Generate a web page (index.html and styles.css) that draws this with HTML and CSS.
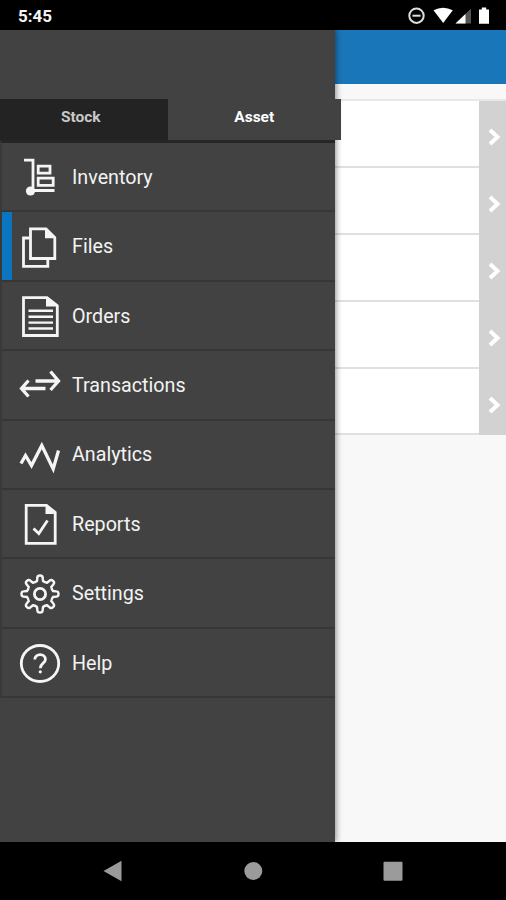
FILE: index.html
```html
<!DOCTYPE html>
<html lang="en">
<head>
<meta charset="utf-8">
<title>Files</title>
<link rel="stylesheet" href="styles.css">
</head>
<body>
<div class="phone">
  <header class="status">
    <span class="clock">5:45</span>
    <svg class="status-icons" width="84" height="20" viewBox="0 0 84 20">
      <circle cx="10.5" cy="9.700" r="7.2" fill="none" stroke="#ddd" stroke-width="2"/>
      <path d="M6.5 9.700h8" stroke="#ddd" stroke-width="2"/>
      <path d="M27.5 4.300Q37 -1 46.800 4.300L37.200 17Z" fill="#fff"/>
      <path d="M49.500 17.500L65 2.500V17.500Z" fill="#555"/>
      <path d="M49.500 17.500L59.500 8V17.500Z" fill="#fff"/>
      <path d="M73 3.500h2.800V1.500h4.400v2h2.800v14.200H73Z" fill="#fff"/>
    </svg>
  </header>

  <div class="screen">
    <main class="page">
      <div class="appbar"></div>
      <div class="list">
        <div class="entry"><span class="go"><svg width="14" height="18" viewBox="0 0 14 18"><path d="M3 2L10.500 9L3 16"/></svg></span></div>
        <div class="entry"><span class="go"><svg width="14" height="18" viewBox="0 0 14 18"><path d="M3 2L10.500 9L3 16"/></svg></span></div>
        <div class="entry"><span class="go"><svg width="14" height="18" viewBox="0 0 14 18"><path d="M3 2L10.500 9L3 16"/></svg></span></div>
        <div class="entry"><span class="go"><svg width="14" height="18" viewBox="0 0 14 18"><path d="M3 2L10.500 9L3 16"/></svg></span></div>
        <div class="entry"><span class="go"><svg width="14" height="18" viewBox="0 0 14 18"><path d="M3 2L10.500 9L3 16"/></svg></span></div>
      </div>
    </main>

    <aside class="drawer">
      <div class="tabs">
        <div class="tab stock">Stock</div>
        <div class="tab asset">Asset</div>
      </div>
      <nav class="menu">
        <a class="item">
          <svg class="icon" viewBox="0 0 40 40"><path d="M4 3.200H13V32.500M14 33.500H34.500"/><path d="M18.200 9.200H30v7H18.200ZM18.200 21.200H33.200v7.200H18.200Z"/><circle cx="10.500" cy="34" r="4.600" class="solid"/></svg>
          <span>Inventory</span>
        </a>
        <a class="item active">
          <svg class="icon" viewBox="0 0 40 40"><path d="M9.500 11H3.500V39.300H27.800V32"/><path d="M10.500 1.800H26L34.800 10.500V31.500H10.500Z"/><path d="M25 1.500V11.200H35Z" class="solid"/></svg>
          <span>Files</span>
        </a>
        <a class="item">
          <svg class="icon" viewBox="0 0 40 40"><path d="M3.500 1.700H27L37.300 9.700V39.500H3.500Z"/><path d="M26 1.500V10.500H37.500Z" class="solid"/><path class="lines" d="M8.500 14.800H33M8.500 20.700H33M8.500 26.600H33M8.500 32.500H33"/></svg>
          <span>Orders</span>
        </a>
        <a class="item">
          <svg class="icon bold" viewBox="0 0 40 40"><path d="M15.500 15H38.500M30.500 5.500L38.500 15L30.500 24M25.500 22.500H2M8.500 14.500L1.500 22.500L8.500 30.500"/></svg>
          <span>Transactions</span>
        </a>
        <a class="item">
          <svg class="icon bold" viewBox="0 0 40 40"><path d="M1 28.500L5.500 20.500L11.500 30.500L21.800 10.500L33.200 34L38.500 15.500"/></svg>
          <span>Analytics</span>
        </a>
        <a class="item">
          <svg class="icon" viewBox="0 0 40 40"><path d="M6.200 1.300H26.500L35.200 8.500V39.300H6.200Z"/><path d="M25.500 1.300V10H35Z" class="solid"/><path d="M13.500 24.500L18.800 29.500L27.500 16.500"/></svg>
          <span>Reports</span>
        </a>
        <a class="item">
          <svg class="icon" viewBox="-20 -20 40 40"><path class="gear" d="M-3 -13L-2.600 -16.500C-2.500 -19.200 2.500 -19.200 2.600 -16.500L3 -13Q4.800 -11.500 7.070 -11.310L9.830 -13.510C11.810 -15.340 15.340 -11.810 13.510 -9.830L11.310 -7.070Q11.500 -4.800 13 -3L16.500 -2.600C19.200 -2.500 19.200 2.500 16.500 2.600L13 3Q11.500 4.800 11.310 7.070L13.510 9.830C15.340 11.810 11.810 15.340 9.830 13.510L7.070 11.310Q4.800 11.500 3 13L2.600 16.500C2.500 19.200 -2.500 19.200 -2.600 16.500L-3 13Q-4.800 11.500 -7.070 11.310L-9.830 13.510C-11.810 15.340 -15.340 11.810 -13.510 9.830L-11.310 7.070Q-11.500 4.800 -13 3L-16.500 2.600C-19.200 2.500 -19.200 -2.500 -16.500 -2.600L-13 -3Q-11.500 -4.800 -11.310 -7.070L-13.510 -9.830C-15.340 -11.810 -11.810 -15.340 -9.830 -13.510L-7.070 -11.310Q-4.800 -11.500 -3 -13Z"/><circle r="5.600"/></svg>
          <span>Settings</span>
        </a>
        <a class="item">
          <svg class="icon" viewBox="-20 -20.500 40 40"><ellipse rx="18.700" ry="18"/><path d="M-5.200 -4C-5 -10.500 5.400 -10.500 5.400 -4C5.400 -.3 .3 -.2 .3 4.800"/><circle cx=".3" cy="8.300" r="1.600" class="dot"/></svg>
          <span>Help</span>
        </a>
      </nav>
    </aside>
  </div>

  <footer class="navbar">
    <svg width="24" height="24" viewBox="0 0 24 24"><path d="M2.500 12L20.500 1.800V22.200Z"/></svg>
    <svg width="24" height="24" viewBox="0 0 24 24"><circle cx="12.300" cy="12" r="9"/></svg>
    <svg width="24" height="24" viewBox="0 0 24 24"><rect x="2.500" y="2.700" width="19" height="19" rx="1"/></svg>
  </footer>
</div>
</body>
</html>
```
FILE: styles.css
```css
* { box-sizing: border-box; }

body {
  margin: 0;
  background: #000;
  font-family: Roboto, sans-serif;
}

.phone {
  width: 506px;
  height: 900px;
  display: flex;
  flex-direction: column;
  overflow: hidden;
}

.status {
  height: 30px;
  flex: none;
  display: flex;
  justify-content: space-between;
  align-items: center;
  padding: 1px 16px 0 18px;
  background: #000;
  color: #f4f4f4;
}

.clock {
  font-size: 17px;
  font-weight: 700;
}

.screen {
  position: relative;
  height: 812px;
  flex: none;
}

.page {
  height: 100%;
  background: #f8f8f8;
}

.appbar {
  height: 54px;
  background: #1976b9;
}

.list {
  margin-top: 15px;
  border-top: 2px solid #e8e8e8;
}

.entry {
  height: 66.900px;
  display: flex;
  justify-content: flex-end;
  background: #fff;
  border-bottom: 2px solid #e0e0e0;
}

.go {
  width: 27px;
  height: 66.900px;
  display: flex;
  align-items: center;
  justify-content: center;
  padding: 6px 0 0 2px;
  background: #d2d2d2;
}

.go path {
  fill: none;
  stroke: #fff;
  stroke-width: 4;
}

.drawer {
  position: absolute;
  left: 0;
  top: 0;
  width: 335px;
  height: 812px;
  padding-top: 69px;
  background: #424242;
  box-shadow: 1px 0 6px rgba(0, 0, 0, .45);
}

.tabs {
  display: flex;
  width: 341px;
  height: 41px;
  font-size: 15.500px;
  font-weight: 700;
  line-height: 37px;
  text-align: center;
}

.stock {
  width: 167.500px;
  padding-right: 6px;
  background: #232323;
  color: #c9c9c9;
}

.asset {
  flex: 1;
  background: #424242;
  color: #fff;
}

.menu {
  border-top: 3px solid #262626;
  border-left: 2px solid #393939;
}

.item {
  height: 69.400px;
  display: flex;
  align-items: center;
  padding: 1.300px 0 0 18px;
  border-bottom: 2px solid #373737;
  color: #f3f3f3;
  font-size: 19.700px;
}

.item span {
  margin-left: 12px;
}

.active {
  box-shadow: inset 10px 0 #0b76bf;
}

.icon {
  width: 40px;
  height: 40px;
  flex: none;
  overflow: visible;
  fill: none;
  stroke: #f5f5f5;
  stroke-width: 2.800;
}

.bold {
  stroke-width: 3.300;
}

.gear, .lines {
  stroke-width: 2.400;
}

.solid, .dot {
  fill: #f5f5f5;
  stroke: none;
}

.navbar {
  flex: 1;
  display: flex;
  justify-content: space-between;
  align-items: center;
  padding: 0 101px;
  background: #000;
}

.navbar svg {
  fill: #9b9b9b;
}
```
